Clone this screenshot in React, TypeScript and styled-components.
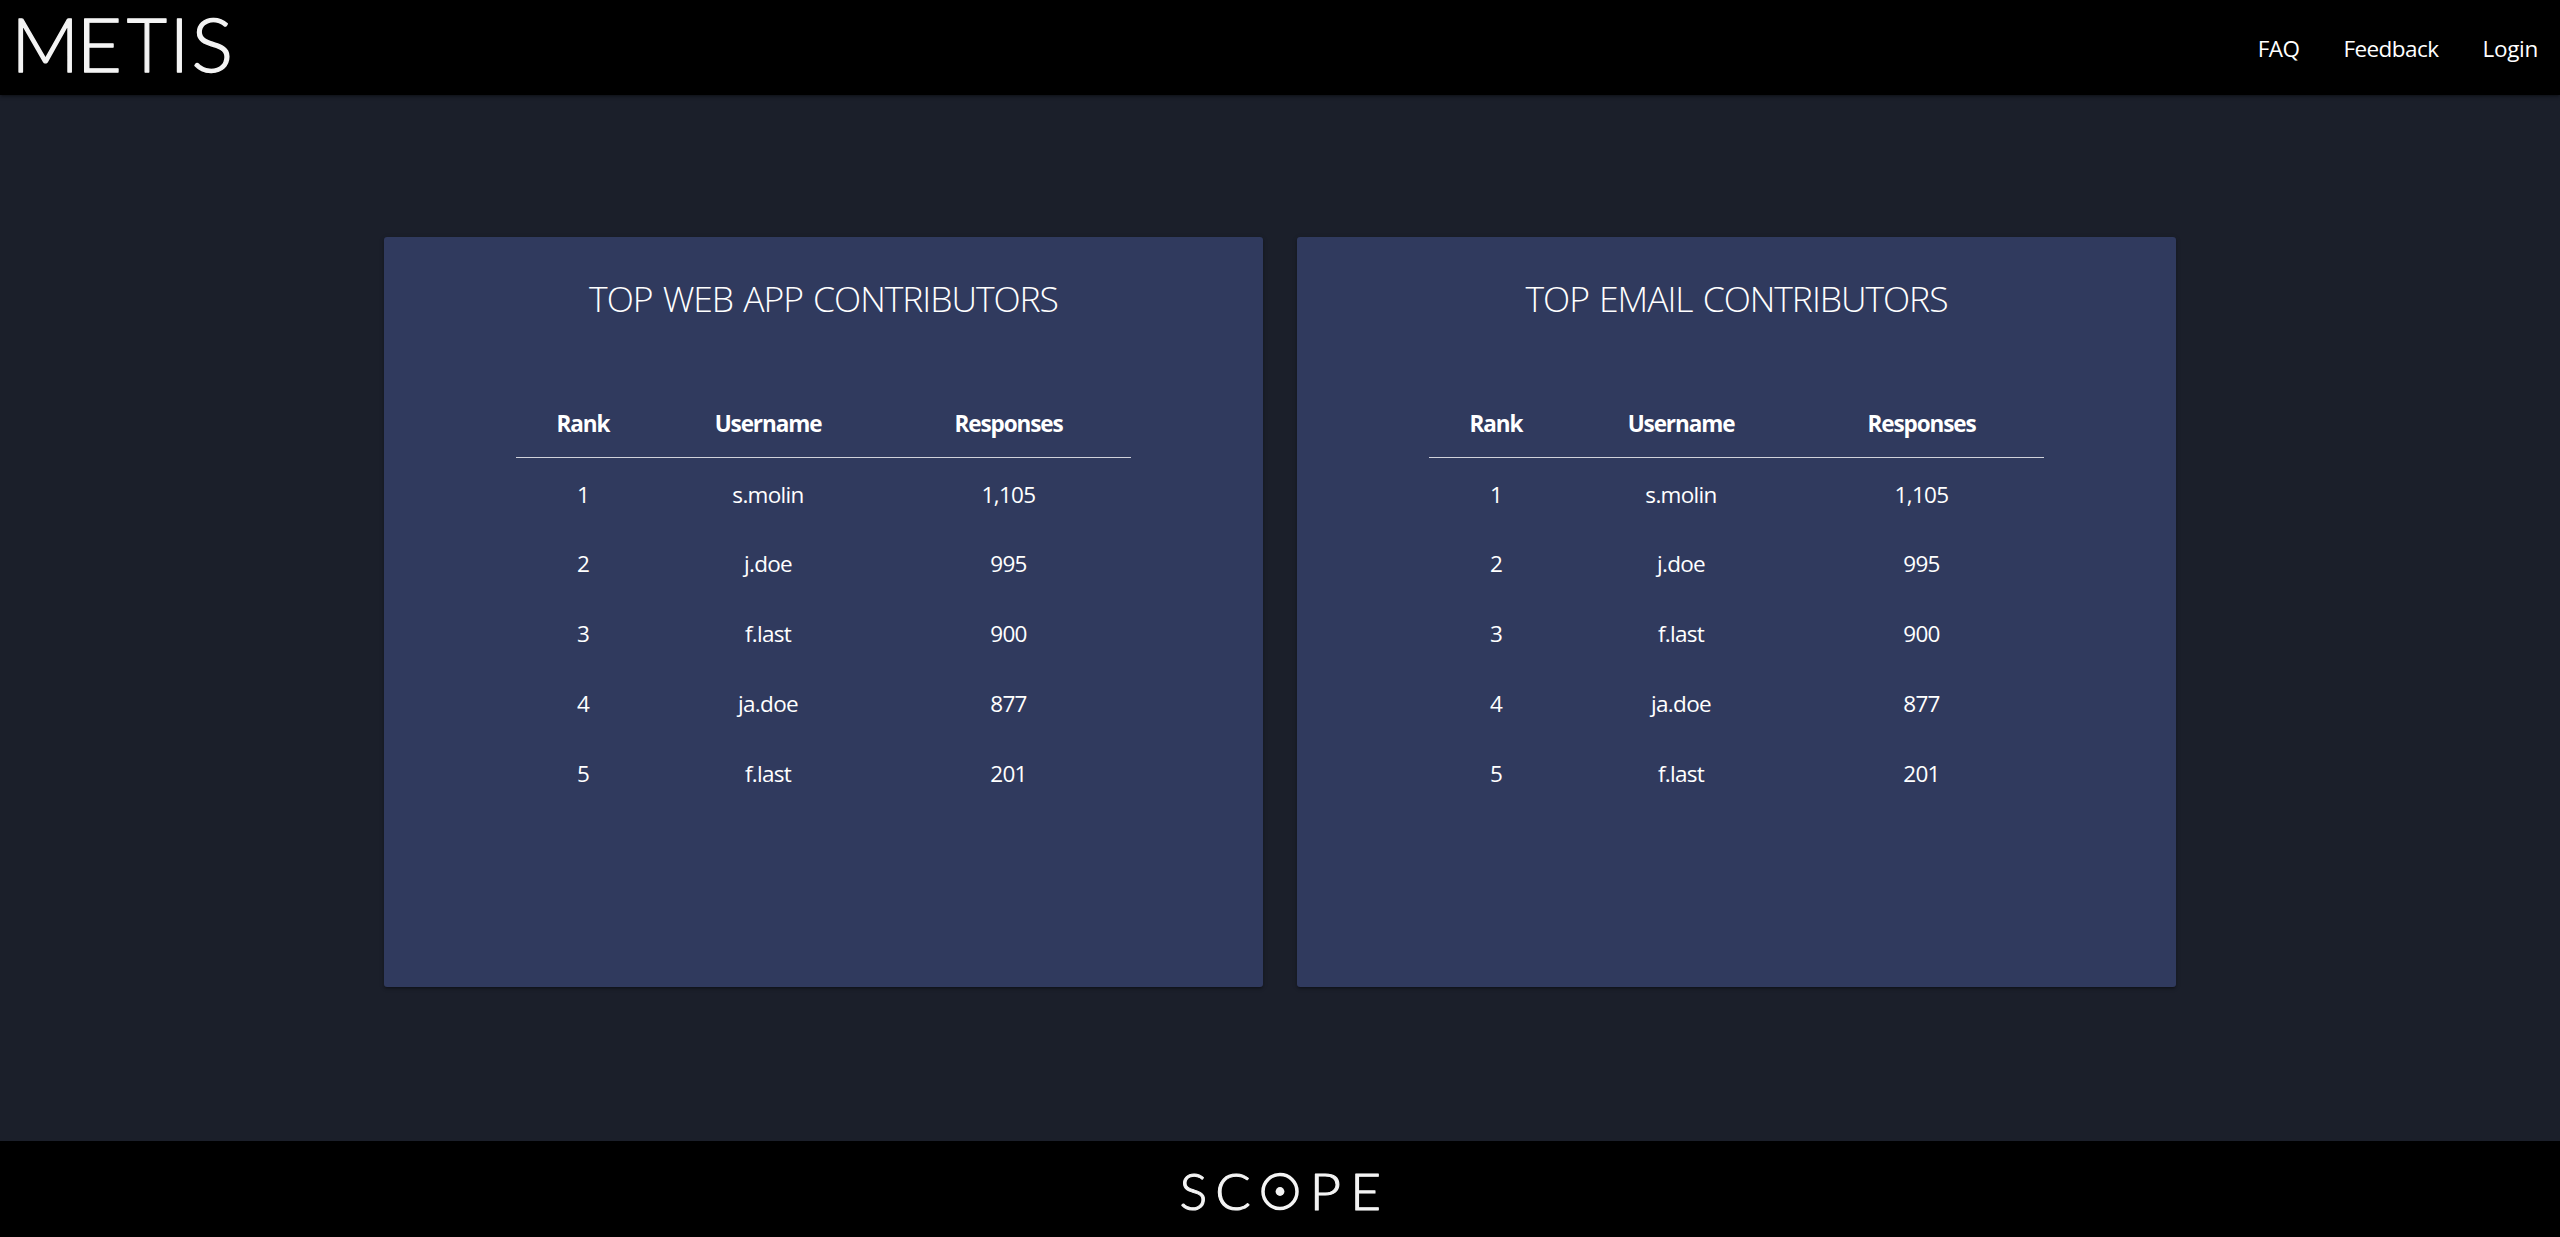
import React from 'react';
import styled, { createGlobalStyle } from 'styled-components';

const GlobalStyle = createGlobalStyle`
  * { box-sizing: border-box; }
  body {
    margin: 0;
    background: #1b1f2a;
    color: #fff;
    font-family: 'Open Sans', 'Noto Sans', sans-serif;
    font-size: 22.5px;
    line-height: 1.5;
  }
`;

const Page = styled.div`
  display: flex;
  flex-direction: column;
  height: 100vh;
  min-height: 1237px;
`;

const NavBar = styled.header`
  display: flex;
  justify-content: space-between;
  height: 95px;
  background: #000;
  box-shadow: 0 2px 2px rgba(0, 0, 0, 0.14), 0 3px 1px -2px rgba(0, 0, 0, 0.12),
    0 1px 5px rgba(0, 0, 0, 0.2);
`;

const NavLinks = styled.nav`
  display: flex;
  align-items: center;
  gap: 44px;
  padding: 2px 22px 0 0;
`;

const NavLink = styled.a<{ $tracking: number }>`
  color: #fff;
  text-decoration: none;
  letter-spacing: ${(p) => p.$tracking}px;
`;

const Main = styled.main`
  display: flex;
  flex: 1;
  justify-content: center;
  align-items: flex-start;
  gap: 34px;
  padding-top: 142px;
`;

const Card = styled.section`
  display: flex;
  flex-direction: column;
  align-items: center;
  width: 879px;
  height: 750px;
  padding-top: 34px;
  border-radius: 3px;
  background: #303a5e;
  box-shadow: 0 2px 2px rgba(0, 0, 0, 0.14), 0 3px 1px -2px rgba(0, 0, 0, 0.12),
    0 1px 5px rgba(0, 0, 0, 0.2);
`;

const CardTitle = styled.h2`
  margin: 0 0 65px;
  font-size: 35.5px;
  font-weight: 300;
  line-height: 54px;
  letter-spacing: -1.05px;
  word-spacing: 2px;
`;

const Table = styled.table`
  width: 615px;
  table-layout: fixed;
  border-collapse: collapse;
  text-align: center;
`;

const HeadCell = styled.th<{ $width: number }>`
  width: ${(p) => p.$width}px;
  height: 67px;
  padding: 1px 0 0;
  border-bottom: 1px solid #d0d2da;
  font-weight: 700;
  letter-spacing: -1.1px;
`;

const Cell = styled.td`
  height: 69.8px;
  padding: 5px 0 0;
  letter-spacing: -0.7px;
`;

const Footer = styled.footer`
  display: flex;
  justify-content: center;
  height: 96px;
  background: #000;
`;

const Logo = styled.svg`
  display: block;
  fill: #f4f4f4;
  stroke: #f4f4f4;
  stroke-linejoin: round;
  font-family: Lato, 'Open Sans', sans-serif;
  font-weight: 300;
`;

type Letter = { char: string; x: number; stretch: number };

const Letters = ({ items, baseline, size, weight }: { items: Letter[]; baseline: number; size: number; weight: number }) => (
  <>
    {items.map((l) => (
      <text
        key={l.char + l.x}
        transform={`translate(${l.x} ${baseline}) scale(${l.stretch} 1)`}
        fontSize={size}
        strokeWidth={weight}
        textAnchor="middle"
      >
        {l.char}
      </text>
    ))}
  </>
);

const metis: Letter[] = [
  { char: 'M', x: 45.2, stretch: 1.01 },
  { char: 'E', x: 99.3, stretch: 1.06 },
  { char: 'T', x: 146.8, stretch: 0.94 },
  { char: 'I', x: 179.4, stretch: 1 },
  { char: 'S', x: 212.4, stretch: 1.05 },
];

const scope: Letter[] = [
  { char: 'S', x: 23.4, stretch: 1.03 },
  { char: 'C', x: 62.9, stretch: 1.04 },
  { char: 'P', x: 155.3, stretch: 1.07 },
  { char: 'E', x: 195.6, stretch: 1.05 },
];

const links = [
  { label: 'FAQ', tracking: -0.6 },
  { label: 'Feedback', tracking: -0.55 },
  { label: 'Login', tracking: -0.3 },
];

const rows = [
  ['1', 's.molin', '1,105'],
  ['2', 'j.doe', '995'],
  ['3', 'f.last', '900'],
  ['4', 'ja.doe', '877'],
  ['5', 'f.last', '201'],
];

const Leaderboard = ({ title }: { title: string }) => (
  <Card>
    <CardTitle>{title}</CardTitle>
    <Table>
      <thead>
        <tr>
          <HeadCell $width={134}>Rank</HeadCell>
          <HeadCell $width={236}>Username</HeadCell>
          <HeadCell $width={245}>Responses</HeadCell>
        </tr>
      </thead>
      <tbody>
        {rows.map((row) => (
          <tr key={row[0]}>
            {row.map((value) => (
              <Cell key={value}>{value}</Cell>
            ))}
          </tr>
        ))}
      </tbody>
    </Table>
  </Card>
);

export default function App() {
  return (
    <Page>
      <GlobalStyle />
      <NavBar>
        <Logo width={250} height={95} aria-label="METIS">
          <Letters items={metis} baseline={72.1} size={74} weight={1.3} />
        </Logo>
        <NavLinks>
          {links.map((l) => (
            <NavLink key={l.label} $tracking={l.tracking}>{l.label}</NavLink>
          ))}
        </NavLinks>
      </NavBar>
      <Main>
        <Leaderboard title="TOP WEB APP CONTRIBUTORS" />
        <Leaderboard title="TOP EMAIL CONTRIBUTORS" />
      </Main>
      <Footer>
        <Logo width={220} height={96} aria-label="SCOPE">
          <Letters items={scope} baseline={68.5} size={50.5} weight={1} />
          <circle cx={110} cy={50.5} r={17} fill="none" strokeWidth={3.5} />
          <circle cx={110} cy={50.5} r={4.4} stroke="none" />
        </Logo>
      </Footer>
    </Page>
  );
}
